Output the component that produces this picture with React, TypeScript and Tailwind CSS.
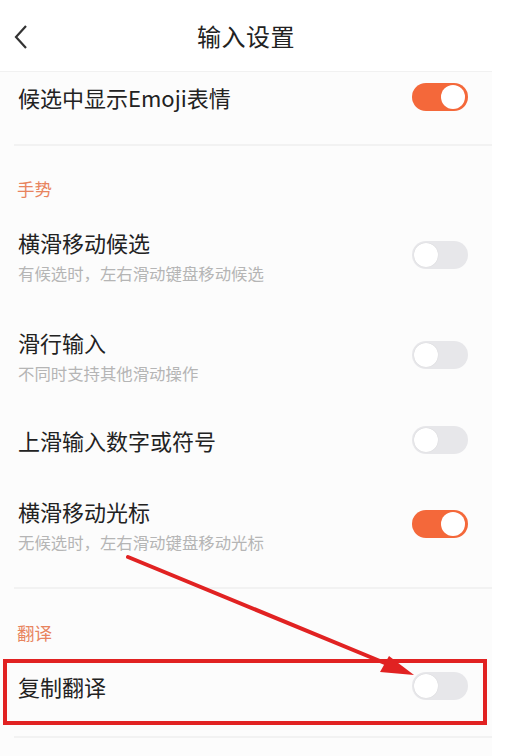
import React from "react";

function Toggle({ on }: { on: boolean }) {
  return (
    <div
      className={`relative h-[28px] w-[56px] shrink-0 rounded-full ${
        on ? "bg-[#f4683a]" : "bg-[#e7e7ea]"
      }`}
    >
      <div
        className={`absolute top-[2px] h-[24px] w-[24px] rounded-full bg-white ${
          on ? "right-[3px]" : "left-[2px] shadow-[0_0_1px_rgba(0,0,0,0.15)]"
        }`}
      ></div>
    </div>
  );
}

function Row({
  title,
  sub,
  on,
  className = "",
}: {
  title: string;
  sub?: string;
  on: boolean;
  className?: string;
}) {
  return (
    <div className={`flex items-center justify-between pl-[18px] pr-[24px] ${sub ? "h-[56px]" : "h-[30px]"} ${className}`}>
      <div className="flex flex-col">
        <span className="text-[22px] leading-[30px] text-[#222]">{title}</span>
        {sub && (
          <span className="mt-[6px] text-[16.4px] leading-[20px] text-[#b5b5b5]">{sub}</span>
        )}
      </div>
      <Toggle on={on} />
    </div>
  );
}

export default function App() {
  return (
    <div
      className="relative h-[756px] w-[506px] overflow-hidden bg-white"
      style={{ fontFamily: '"Noto Sans CJK SC", "Noto Sans", sans-serif' }}
    >
      <div className="h-full w-[492px] bg-[#fcfcfc]">
        {/* header */}
        <div className="relative flex h-[72px] items-center justify-center border-b border-[#f1f1f1] bg-white">
          <svg className="absolute left-[12px] top-[24px]" width="18" height="26" viewBox="0 0 18 26">
            <path d="M14 2 L4 13 L14 24" fill="none" stroke="#333" strokeWidth="2.2" />
          </svg>
          <span className="text-[24px] tracking-[0.5px] text-[#222]">输入设置</span>
        </div>

        <Row title="候选中显示Emoji表情" on={true} className="!h-[50px]" />
        <div className="ml-[14px] mt-[22px] h-[2px] bg-[#f2f2f2]"></div>

        <div className="ml-[17px] mt-[31px] h-[24px] text-[17.5px] leading-[24px] text-[#e8845e]">手势</div>

        <Row className="mt-[26px]" title="横滑移动候选" sub="有候选时，左右滑动键盘移动候选" on={false} />
        <Row className="mt-[44px]" title="滑行输入" sub="不同时支持其他滑动操作" on={false} />
        <Row className="mt-[42px]" title="上滑输入数字或符号" on={false} />
        <Row className="mt-[41px]" title="横滑移动光标" sub="无候选时，左右滑动键盘移动光标" on={true} />

        <div className="ml-[14px] mt-[35px] h-[2px] bg-[#f2f2f2]"></div>

        <div className="ml-[17px] mt-[32px] h-[24px] text-[17.5px] leading-[24px] text-[#e8845e]">翻译</div>

        <Row className="mt-[26px]" title="复制翻译" on={false} />

        <div className="ml-[14px] mt-[35px] h-[2px] bg-[#f2f2f2]"></div>
      </div>

      {/* red annotation */}
      <svg className="pointer-events-none absolute left-0 top-0" width="506" height="756" viewBox="0 0 506 756">
        <rect x="5" y="661" width="480" height="62" fill="none" stroke="#e12222" strokeWidth="4" />
        <line x1="128" y1="557" x2="392" y2="666" stroke="#e12222" strokeWidth="4" strokeLinecap="round" />
        <polygon points="414,675 389,656 380,672" fill="#e12222" />
      </svg>
    </div>
  );
}
